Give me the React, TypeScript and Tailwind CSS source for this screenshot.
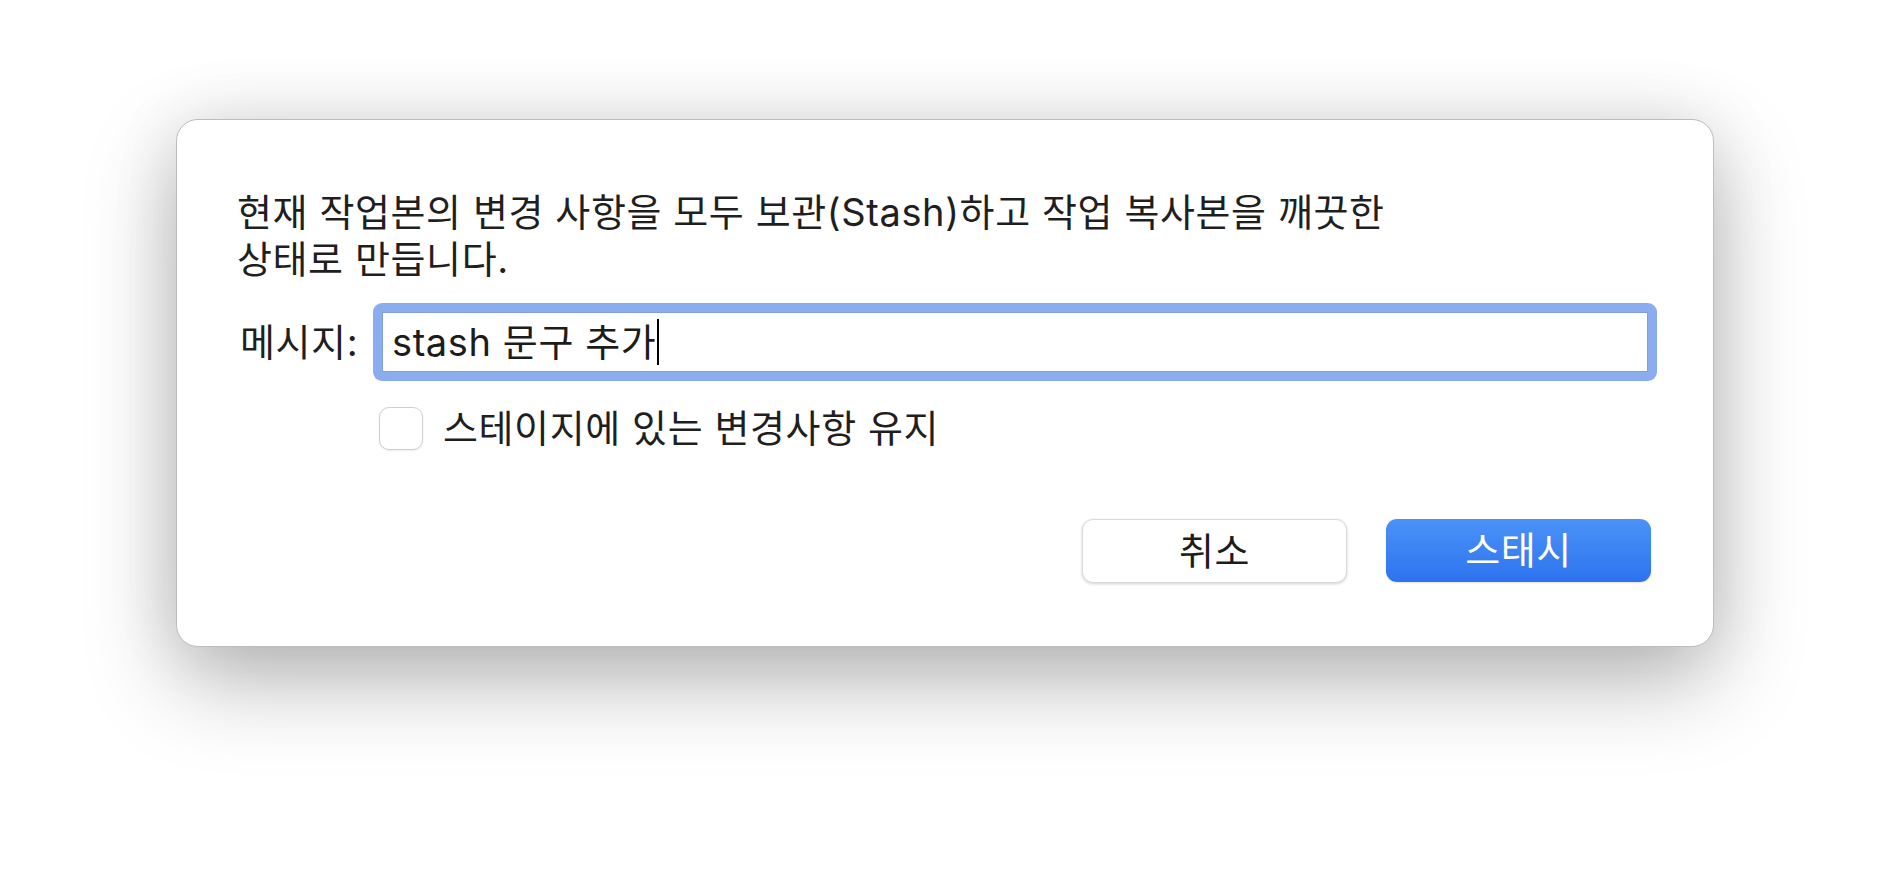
import React from 'react';

const font = { fontFamily: 'Inter, "Noto Sans CJK KR", sans-serif' };

const StashDialog: React.FC = () => {
  const [keepStaged, setKeepStaged] = React.useState(false);

  return (
    <div
      className="w-[1538px] h-[528px] rounded-[22px] border border-[#bdbdbd] bg-white pl-[60px] pr-[56px] pt-[69px] shadow-[0_34px_90px_rgba(0,0,0,0.28),0_0_70px_rgba(0,0,0,0.09)]"
      style={font}
    >
      <p className="whitespace-nowrap text-[38px] leading-[47px] tracking-[0.6px] text-[#1f1f1f]">
        현재 작업본의 변경 사항을 모두 보관(Stash)하고 작업 복사본을 깨끗한
        <br />
        상태로 만듭니다.
      </p>

      <div className="mt-[20px] flex items-center leading-[45px]">
        <label className="w-[136px] pl-[3px] text-[38px] tracking-[0.6px] text-[#1f1f1f]">메시지:</label>
        <div className="flex-1 rounded-[9px] bg-[#8badf0] p-[9px]">
          <div className="flex h-[60px] items-center border border-[#7f9fdf] bg-white pl-[9px]">
            <span className="text-[38px] tracking-[0.6px] text-[#1c1c1c]">stash 문구 추가</span>
            <span className="ml-[1px] h-[46px] w-[2px] bg-black" />
          </div>
        </div>
      </div>

      <div className="mt-[25px] flex h-[45px] items-center pl-[142px]">
        <button
          onClick={() => setKeepStaged(!keepStaged)}
          className="h-[43px] w-[44px] rounded-[10px] border border-[#cfcfcf] bg-white shadow-[0_1px_2px_rgba(0,0,0,0.08)]"
          aria-label="keep staged"
        />
        <span className="ml-[20px] text-[38px] leading-[45px] tracking-[0.6px] text-[#1f1f1f]">스테이지에 있는 변경사항 유지</span>
      </div>

      <div className="mt-[68px] flex justify-end gap-[39px] pr-[6px]">
        <button className="h-[64px] w-[265px] rounded-[11px] border border-[#dadada] bg-white text-[38px] leading-[45px] tracking-[0.6px] text-[#1c1c1c] shadow-[0_1px_3px_rgba(0,0,0,0.18)]">
          취소
        </button>
        <button className="h-[63px] w-[265px] rounded-[11px] bg-gradient-to-b from-[#4a92f7] to-[#2e73ef] text-[38px] leading-[45px] tracking-[0.6px] text-white shadow-[0_1px_2px_rgba(0,0,0,0.12)]">
          스태시
        </button>
      </div>
    </div>
  );
};

export default function App() {
  return (
    <div className="flex h-[880px] w-full justify-center overflow-hidden bg-white pt-[119px]">
      <StashDialog />
    </div>
  );
}
